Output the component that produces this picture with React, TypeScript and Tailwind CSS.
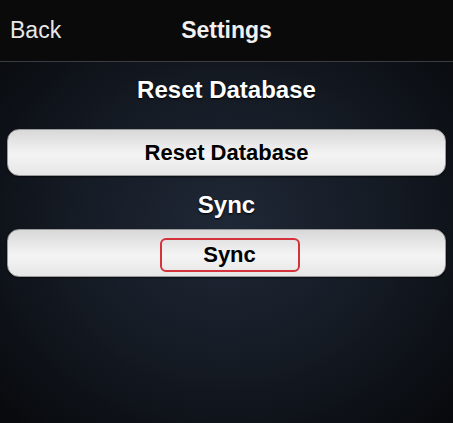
export default function App() {
  return (
    <div
      className="w-[453px] h-[423px] flex flex-col overflow-hidden bg-black"
      style={{ fontFamily: '"Liberation Sans", Arial, sans-serif' }}
    >
      {/* ナビゲーションバー */}
      <div className="h-[62px] shrink-0 bg-[#0a0a0a] border-b border-[#3a3d42] grid grid-cols-[1fr_auto_1fr] items-center">
        <span className="pl-[10px] text-[23px] text-[#e8e8e8]">Back</span>
        <span className="text-[23px] font-semibold text-[#f0f0f0]">Settings</span>
        <span />
      </div>

      {/* 本体 */}
      <div className="flex-1 flex flex-col px-[7px] bg-[radial-gradient(ellipse_at_50%_45%,#1f2836_0%,#161c26_45%,#07090c_100%)]">
        <h2 className="mt-[14px] h-[28px] leading-[28px] text-center text-[24px] font-bold text-white [text-shadow:0_1px_2px_#000]">
          Reset Database
        </h2>
        <button className="mt-[25px] h-[47px] w-full rounded-[12px] bg-[linear-gradient(#d8d8d8,#f4f4f4_55%,#e6e6e6)] border border-[#9a9a9a] shadow-[0_1px_2px_rgba(0,0,0,0.6)] text-[22px] font-bold text-black">
          Reset Database
        </button>
        <h2 className="mt-[15px] h-[28px] leading-[28px] text-center text-[24px] font-bold text-white [text-shadow:0_1px_2px_#000]">
          Sync
        </h2>
        <button className="mt-[10px] h-[48px] w-full rounded-[12px] bg-[linear-gradient(#d8d8d8,#f4f4f4_55%,#e6e6e6)] border border-[#9a9a9a] shadow-[0_1px_2px_rgba(0,0,0,0.6)] flex items-center justify-center">
          <span className="ml-[6px] mt-[3px] w-[140px] h-[34px] rounded-[6px] border-2 border-[#d4333b] flex items-center justify-center text-[22px] font-bold text-black">
            Sync
          </span>
        </button>
      </div>
    </div>
  );
}
